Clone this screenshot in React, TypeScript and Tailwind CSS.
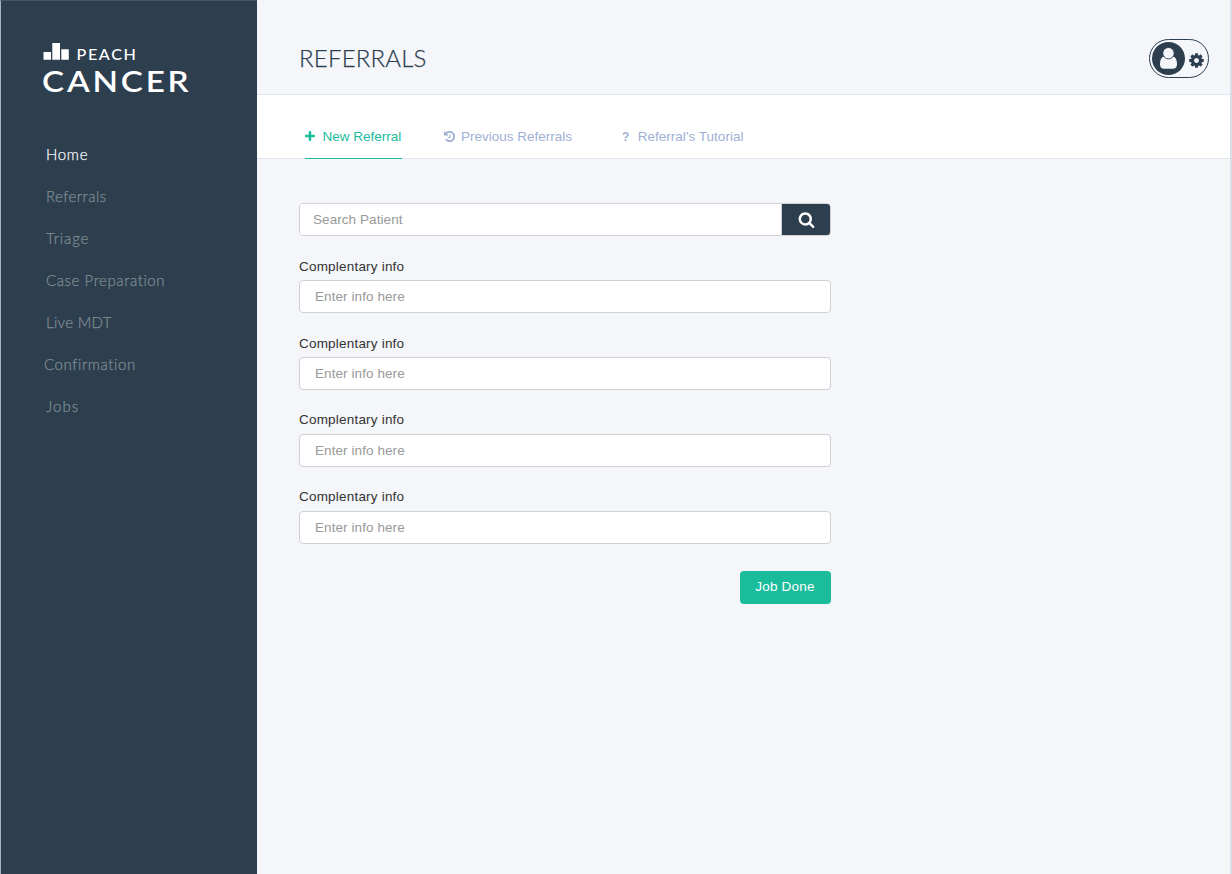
import React from "react";

const NAV = [
  { label: "Home", style: "text-[#f4f7f8] pl-[45px] tracking-[0.7px]" },
  { label: "Referrals", style: "text-[#7d8c8f] pl-[45px] tracking-[0.45px]" },
  { label: "Triage", style: "text-[#7d8c8f] pl-[45px] tracking-[0.85px]" },
  { label: "Case Preparation", style: "text-[#7d8c8f] pl-[45px] tracking-[0.58px]" },
  { label: "Live MDT", style: "text-[#7d8c8f] pl-[45px] tracking-[0.3px]" },
  { label: "Confirmation", style: "text-[#7d8c8f] pl-[43px] tracking-[0.6px]" },
  { label: "Jobs", style: "text-[#7d8c8f] pl-[45px] tracking-[1.1px]" },
];

const FIELDS = [
  { gap: "mt-[22px]", label: "h-[22px]" },
  { gap: "mt-[22px]", label: "h-[22px]" },
  { gap: "mt-[21px]", label: "h-[23px]" },
  { gap: "mt-[21px]", label: "h-[23px]" },
];

const HISTORY =
  "M1664 896q0 156-61 298t-164 245-245 164-298 61q-172 0-327-72.500t-264-204.500q-7-10-6.500-22.500t8.500-20.500l137-138q10-9 25-9 16 2 23 12 73 95 179 147t225 52q104 0 198.500-40.500t163.500-109.500 109.500-163.500 40.500-198.500-40.500-198.500-109.500-163.500-163.500-109.500-198.500-40.500q-98 0-188 35.500t-160 101.500l137 138q31 30 14 69-17 40-59 40h-448q-26 0-45-19t-19-45v-448q0-42 40-59 39-17 69 14l130 129q107-101 244.500-156.500t284.500-55.500q156 0 298 61t245 164 164 245 61 298zm-640-288v448q0 14-9 23t-23 9h-320q-14 0-23-9t-9-23v-64q0-14 9-23t23-9h224v-352q0-14 9-23t23-9h64q14 0 23 9t9 23z";
const COG =
  "M1152 896q0-106-75-181t-181-75-181 75-75 181 75 181 181 75 181-75 75-181zm512-109v222q0 12-8 23t-20 13l-185 28q-19 54-39 91 35 50 107 138 10 12 10 25t-9 23q-27 37-99 108t-94 71q-12 0-26-9l-138-108q-44 23-91 38-16 136-29 186-7 28-36 28h-222q-14 0-24.500-8.500t-11.500-21.500l-28-184q-49-16-90-37l-141 107q-10 9-25 9-14 0-25-11-126-114-165-168-7-10-7-23 0-12 8-23 15-21 51-66.500t54-70.500q-27-50-41-99l-183-27q-13-2-21-12.500t-8-23.500v-222q0-12 8-23t19-13l186-28q14-46 39-92-40-57-107-138-10-12-10-24 0-10 9-23 26-36 98.500-107.500t94.500-71.500q13 0 26 10l138 107q44-23 91-38 16-136 29-186 7-28 36-28h222q14 0 24.500 8.500t11.500 21.500l28 184q49 16 90 37l142-107q9-9 24-9 13 0 25 10 129 119 165 170 7 8 7 22 0 12-8 23-15 21-51 66.500t-54 70.500q26 50 41 98l183 28q13 2 21 12.500t8 23.500z";
const SEARCH =
  "M1216 832q0-185-131.500-316.500t-316.500-131.500-316.500 131.500-131.500 316.500 131.500 316.500 316.500 131.500 316.500-131.500 131.500-316.500zm512 832q0 52-38 90t-90 38q-54 0-90-38l-343-342q-179 124-399 124-143 0-273.500-55.500t-225-150-150-225-55.500-273.500 55.500-273.500 150-225 225-150 273.500-55.500 273.500 55.500 225 150 150 225 55.500 273.500q0 220-124 399l343 343q37 37 37 90z";

function Glyph({ d, className }: { d: string; className: string }) {
  return (
    <svg viewBox="0 0 1792 1792" className={className} fill="currentColor" aria-hidden="true">
      <path d={d} />
    </svg>
  );
}

function Logo() {
  return (
    <svg width="160" height="60" viewBox="0 0 160 60" className="ml-[41px] mt-[40px] block shrink-0 overflow-visible" fill="#fff">
      <path d="M1.500 11h7.500v7.700H1.500zM10.300 2h7.700v16.700h-7.700zM19.300 8.200h7.500v10.500h-7.500z" />
      <text x="34.500" y="18.700" textLength="61" lengthAdjust="spacingAndGlyphs" className="font-['Lato'] text-[15px] font-medium tracking-[1.500px]">
        PEACH
      </text>
      <text x="0" y="50.700" textLength="149.500" lengthAdjust="spacingAndGlyphs" className="font-['Lato'] text-[29.500px] font-semibold tracking-[2.500px]">
        CANCER
      </text>
    </svg>
  );
}

export default function App() {
  return (
    <div className="flex h-[874px] w-[1232px] overflow-hidden bg-[#f4f6fa] font-['Liberation_Sans',sans-serif]">
      <aside className="flex w-[257px] shrink-0 flex-col border-l border-t border-l-[#a9b3bb] border-t-[#455566] bg-[#2d3e4f]">
        <Logo />
        <nav className="mt-[32px] flex flex-col font-['Lato',sans-serif] text-[15px] font-light [-webkit-text-stroke:0.25px_currentColor]">
          {NAV.map((n) => (
            <a key={n.label} className={`flex h-[42px] items-center ${n.style}`}>
              {n.label}
            </a>
          ))}
        </nav>
      </aside>
      <main className="flex min-w-0 flex-1 flex-col border-r-2 border-r-[#d9dde6]">
        <header className="flex h-[95px] shrink-0 items-start justify-between border-b border-[#e1e5ee] pl-[42px] pr-[21px]">
          <h1 className="mt-[41px] font-['Lato',sans-serif] text-[24px] font-light leading-[34px] tracking-[0.2px] text-[#2d3e4f] [-webkit-text-stroke:0.25px_currentColor]">
            REFERRALS
          </h1>
          <div className="mt-[39px] flex h-[39px] w-[60px] items-center rounded-full border border-[#2d3e4f] pl-[2px] text-[#2d3e4f]">
            <svg width="33" height="34" viewBox="0 0 33 34" className="shrink-0" aria-hidden="true">
              <circle cx="16.500" cy="16.500" r="16.500" fill="#2d3e4f" />
              <path d="M12 14.500C9.500 15 8 17.800 8 22.300C8 25 9.300 26.700 11.500 26.700H21.500C23.700 26.700 25 25 25 22.300C25 17.800 23.500 15 21 14.500Z" fill="#f4f6fa" />
              <circle cx="16.500" cy="11.200" r="5.700" fill="#f4f6fa" stroke="#2d3e4f" strokeWidth="0.900" />
            </svg>
            <Glyph d={COG} className="ml-[3px] mt-[4px] size-[17px] shrink-0" />
          </div>
        </header>
        <div className="flex h-[64px] shrink-0 items-stretch border-b border-[#e1e5ee] bg-white pl-[48px] text-[13.500px] text-[#a0b0d4]">
          <div className="-mb-px flex w-[97px] items-center border-b border-[#1abc9c] pt-[20px] text-[#1abc9c]">
            <svg width="10" height="10" viewBox="0 0 10 10" className="mb-[2px] shrink-0" aria-hidden="true">
              <path d="M5 1.200V8.800M1.200 5H8.800" stroke="currentColor" strokeWidth="2.500" strokeLinecap="round" />
            </svg>
            <span className="ml-[7.500px] mt-[2px] whitespace-nowrap">New Referral</span>
          </div>
          <div className="ml-[41px] flex w-[130px] items-center pt-[20px]">
            <Glyph d={HISTORY} className="mb-px size-[13px] shrink-0" />
            <span className="ml-[5px] mt-[2px] whitespace-nowrap">Previous Referrals</span>
          </div>
          <div className="ml-[49px] flex items-center pt-[20px]">
            <span className="text-[12px] font-bold">?</span>
            <span className="ml-[8.500px] mt-[2px] whitespace-nowrap">Referral’s Tutorial</span>
          </div>
        </div>
        <form className="ml-[42px] mt-[44px] flex w-[532px] flex-col text-[13.500px]">
          <div className="flex h-[33px] overflow-hidden rounded-[4px] border border-[#cfd1d4]">
            <div className="flex flex-1 items-center bg-white pl-[13px] pt-[2px] tracking-[0.070px] text-[#999]">Search Patient</div>
            <button type="button" className="flex w-[49px] items-center justify-center border-l border-[#cfd1d4] bg-[#2d3e4f] pb-px text-white">
              <Glyph d={SEARCH} className="size-[17px]" />
            </button>
          </div>
          {FIELDS.map((f, i) => (
            <div key={i} className={`flex flex-col ${f.gap}`}>
              <label className={`${f.label} leading-[17px] tracking-[0.200px] text-[#333]`}>Complentary info</label>
              <div className="flex h-[33px] items-center rounded-[4px] border border-[#cfd1d4] bg-white pl-[15px] pt-[2px] tracking-[0.080px] text-[#999]">
                Enter info here
              </div>
            </div>
          ))}
          <button type="button" className="mr-[0.500px] mt-[27px] flex h-[32.500px] w-[91px] items-center justify-center self-end rounded-[4px] bg-[#1abc9c] pb-px tracking-[0.200px] text-white">
            Job Done
          </button>
        </form>
      </main>
    </div>
  );
}
